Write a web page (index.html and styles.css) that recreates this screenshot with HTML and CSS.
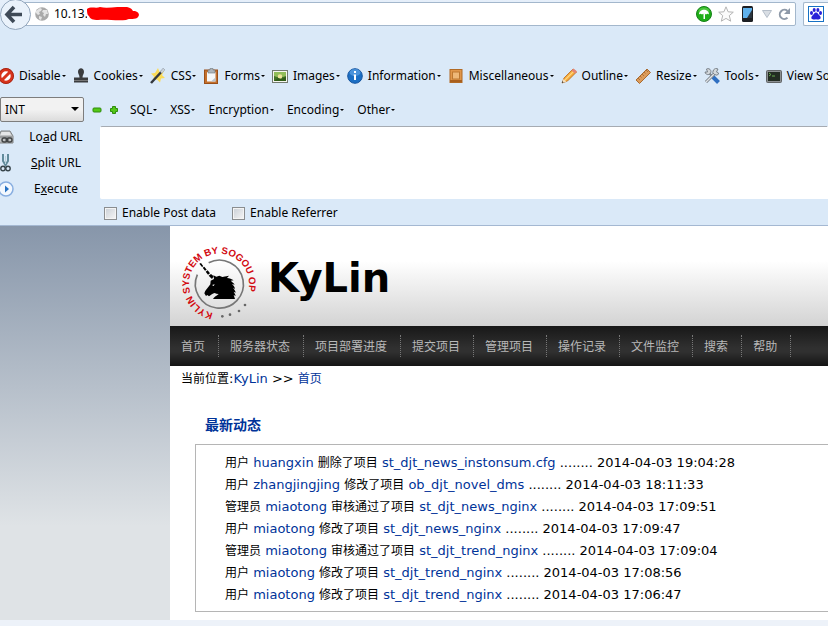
FILE: index.html
```html
<!DOCTYPE html>
<html lang="zh-CN">
<head>
<meta charset="utf-8">
<title>KyLin</title>
<link rel="stylesheet" href="styles.css">
</head>
<body>
<div class="browser">
  <div class="location">
    <button class="back" aria-label="Back"><svg width="32" height="32" viewBox="0 0 32 32"><circle cx="15.500" cy="15.500" r="15" fill="#eaf2fb" stroke="#93a6bc"/><path d="M14 8 7 15.500l7 7.500M8 15.500h14" fill="none" stroke="#3f4a57" stroke-width="3.600"/></svg></button>
    <div class="address">
      <svg width="14" height="14" viewBox="0 0 14 14"><circle cx="7" cy="7" r="6.800" fill="#a9a9a9"/><path d="M1 4l4-3 2 1-1 2-2 1 1 2-2 1-2-2zM8 3l4 0 1 4-2 0-1 3-2-2 1-2-2-1zM4 9l3 1-1 3-2-1z" fill="#e4e4e4"/></svg>
      <input class="url" aria-label="Address" value="10.13.">
      <svg class="scribble" width="52" height="14" viewBox="0 0 52 14"><path d="M0 2C4-1 9 2 13 0c8 2 17-1 27 0 5 1 5 3 6 4 6 0 7 4 5 6-2 3-9 1-12 3-10 1-20-1-28 0-5 0-8-1-9-4C0 8 0 5 0 2z" fill="#f00"/></svg>
      <svg width="16" height="16" viewBox="0 0 16 16"><circle cx="8" cy="8" r="7.500" fill="#1fae17" stroke="#16821a"/><ellipse cx="8" cy="5" rx="5.500" ry="3.500" fill="#65d354" opacity=".6"/><path d="M3 8.500C3 2 13 2 13 8.500c-1-1-2-1-3 0-1-1-1.500-1-2 0-.5-1-1-1-2 0-1-1-2-1-3 0zM7.500 8h1.500v5H7.500z" fill="#fff"/></svg>
      <svg width="16" height="16" viewBox="0 0 16 16"><path d="M8 .8l2.100 5 5.200.4-4 3.400 1.400 5.600L8 12.400l-4.700 2.800 1.400-5.600-4-3.400 5.200-.4z" fill="#fbfbfb" stroke="#b4b4b4"/></svg>
      <svg class="phone" width="11" height="16" viewBox="0 0 11 16"><rect width="11" height="16" rx="1.500" fill="#1d1f23"/><path d="M1 2h9v10H1z" fill="#5fb1ec"/><path d="M10 4v8H5z" fill="#2b3640"/></svg>
      <svg width="10" height="8" viewBox="0 0 10 8"><path d="M.5.500h9L5 7.500z" fill="#d9dee4" stroke="#b5bec9"/></svg>
      <svg width="13" height="13" viewBox="0 0 13 13"><path d="M9.500 9.800A4.600 4.600 0 1 1 9.500 3" fill="none" stroke="#8e99a8" stroke-width="2"/><path d="M12 0v6H6z" fill="#8e99a8"/></svg>
    </div>
    <div class="search"><svg width="16" height="16" viewBox="0 0 16 16"><rect x=".5" y=".5" width="15" height="15" fill="#fff" stroke="#1671c4"/><g fill="#2a22d8"><ellipse cx="3.500" cy="7" rx="1.500" ry="2"/><ellipse cx="6.200" cy="4" rx="1.500" ry="2"/><ellipse cx="9.900" cy="4" rx="1.500" ry="2"/><ellipse cx="12.500" cy="7" rx="1.500" ry="2"/><path d="M8 6.500c2 0 2 2 4 3.500 2 3-1 4-4 3.300-3 .7-6-.3-4-3.300C6 8.500 6 6.500 8 6.500z"/></g></svg></div>
  </div>

  <div class="developer">
    <button class="item"><svg viewBox="0 0 16 16"><circle cx="8" cy="8" r="6.200" fill="#fff" stroke="#d8341c" stroke-width="3"/><path d="M3.500 12.500l9-9" stroke="#d8341c" stroke-width="3"/><circle cx="8" cy="8" r="7.500" fill="none" stroke="#a82413"/></svg>Disable</button>
    <button class="item"><svg viewBox="0 0 16 16"><path d="M5 4c0-5 6-5 6 0 0 2-1.500 3-1.500 5.500H15v5H1v-5h5.500C6.500 7 5 6 5 4z" fill="#3a3c3e"/><path d="M1 12.500h14" stroke="#777"/></svg>Cookies</button>
    <button class="item"><svg viewBox="0 0 16 16"><path d="M8 0l1.500 4 4.500-1-2 4 3 3-4 .5-1 4-3-3-4 1 1-4-3-3 4-.5z" fill="#fbdc59"/><path d="M1 15L14 1" stroke="#33383d" stroke-width="2.500"/><path d="M11 4.500L14 1" stroke="#c9d3dc" stroke-width="2.500"/></svg>CSS</button>
    <button class="item"><svg viewBox="0 0 16 16"><rect x="1.500" y="2" width="13" height="13.500" fill="#c4702c" stroke="#9a4f18"/><path d="M4 4h8.500v9.500H4z" fill="#f5f7f8"/><path d="M8 13.500l4.500-4v4z" fill="#b9c2c9"/><path d="M5 2h2V.5h3V2h2v3H5z" fill="#aeb5ba" stroke="#71777b" stroke-width=".6"/></svg>Forms</button>
    <button class="item"><svg viewBox="0 0 16 16"><rect x=".5" y="2.500" width="15" height="12" fill="#f6f6f0" stroke="#737b70"/><path d="M2 4h12v9H2z" fill="#437326"/><path d="M2 4h12v4l-3 1-3-2-3 2-3-1z" fill="#91bd59"/><circle cx="8" cy="8.500" r="2.300" fill="#eee39a"/><path d="M2 13l4-3 3 1 5-2v4z" fill="#315e18"/></svg>Images</button>
    <button class="item"><svg viewBox="0 0 16 16"><circle cx="8" cy="8" r="7.300" fill="#1c6fc4" stroke="#1555a0"/><ellipse cx="8" cy="4.500" rx="5.500" ry="3.500" fill="#69aceb" opacity=".6"/><path d="M7 3h2v2H7zM6.500 6.500H9V12H7V8z" fill="#fff"/></svg>Information</button>
    <button class="item"><svg viewBox="0 0 16 16"><rect x="2" y="1.500" width="12" height="13" fill="#e0974b" stroke="#b16a25"/><rect x="4.500" y="4" width="7" height="7" fill="#eeb878" stroke="#bd7830"/><path d="M2 13h12" stroke="#a85f1d" stroke-width="2"/></svg>Miscellaneous</button>
    <button class="item"><svg viewBox="0 0 16 16"><path d="M1 15l2-5 9-9 3.500 3L6.500 13z" fill="#f4a83c" stroke="#b76a18" stroke-width=".8"/><path d="M4 12l8.500-8.500" stroke="#ffd77d" stroke-width="1.300"/><path d="M10.500 2.500l2-2L16 3.500l-2 2z" fill="#e48478"/><path d="M1 15l1.500-4 3 2.500z" fill="#f4dfbd"/><path d="M1 15l1.500-.5L1.300 13z" fill="#333"/></svg>Outline</button>
    <button class="item"><svg viewBox="0 0 16 16"><path d="M1 12L12 1l3.500 3.500-11 11z" fill="#dc9c5b" stroke="#a86a30"/><path d="M3 10l2 2M5 8l1.500 1.500M7 6l2 2M9 4l1.500 1.500M11 2l2 2" stroke="#9a5e26" stroke-width=".7"/></svg>Resize</button>
    <button class="item"><svg viewBox="0 0 16 16"><path d="M4 4l5 5" stroke="#80878f" stroke-width="2"/><path d="M9 9l5.500 5.500" stroke="#2f6fc1" stroke-width="4"/><path d="M2 14L12 4" stroke="#727980" stroke-width="3"/><path d="M2 14L12 4" stroke="#dfe4e8" stroke-width="1.400"/><path d="M14 1A3.300 3.300 0 1 0 15 5.500L12.500 4zM2.500 1A3 3 0 1 1 1 4l2.500 0z" fill="#d3d8dc" stroke="#656c73" stroke-width=".8"/></svg>Tools</button>
    <button class="item"><svg viewBox="0 0 16 16"><rect x=".5" y="2.500" width="15" height="12" rx="1" fill="#8b8f91" stroke="#606466"/><path d="M2 4h12v9H2z" fill="#222c22"/><path d="M3 5l2 1.500L3 8M6 8h3" fill="none" stroke="#66a94f"/></svg>View Source</button>
  </div>

  <div class="hackbar">
    <span class="mode"><select aria-label="Mode"><option>INT</option></select></span>
    <button class="sign" aria-label="Remove"><svg width="10" height="10" viewBox="0 0 10 10"><rect x="1" y="3" width="8" height="4" rx="1" fill="#54c817" stroke="#2f8c0c"/></svg></button>
    <button class="sign" aria-label="Add"><svg width="10" height="10" viewBox="0 0 10 10"><path d="M3.500 1.500h3v2h2v3h-2v2h-3v-2h-2v-3h2z" fill="#54c817" stroke="#2f8c0c"/></svg></button>
    <button class="item">SQL</button>
    <button class="item">XSS</button>
    <button class="item">Encryption</button>
    <button class="item">Encoding</button>
    <button class="item">Other</button>
  </div>

  <div class="request">
    <div class="actions">
      <button class="action"><svg width="16" height="16" viewBox="0 0 16 16"><path d="M3 2h9l3 5v7H1V7z" fill="#bfc1c2" stroke="#808384"/><path d="M3.500 3h8L13 6H2.500z" fill="#e5e6e7"/><path d="M2 8h12" stroke="#77797a"/><rect x="4" y="9" width="5" height="4" rx="2" fill="none" stroke="#414344" stroke-width="1.400"/><rect x="9" y="9" width="5" height="4" rx="2" fill="none" stroke="#414344" stroke-width="1.400"/><path d="M7 11h4" stroke="#414344"/></svg><span>Lo<u>a</u>d URL</span></button>
      <button class="action"><svg width="16" height="18" viewBox="0 0 16 18"><path d="M5 0v7l3 5M10 0v7l-3 5" fill="none" stroke="#628b9b" stroke-width="2"/><path d="M7.500 2v8" stroke="#b9d3dc"/><circle cx="5" cy="14.500" r="2.200" fill="none" stroke="#38454b" stroke-width="1.400"/><circle cx="10" cy="14.500" r="2.200" fill="none" stroke="#38454b" stroke-width="1.400"/></svg><span><u>S</u>plit URL</span></button>
      <button class="action"><svg width="16" height="16" viewBox="0 0 16 16"><circle cx="8" cy="8" r="7" fill="#f3f8fe" stroke="#88aee0" stroke-width="1.500"/><path d="M7 4.500l4 3.500-4 3.500z" fill="#2772c4"/></svg><span>E<u>x</u>ecute</span></button>
    </div>
    <div class="payload">
      <textarea aria-label="Request URL"></textarea>
      <div class="options">
        <label><input type="checkbox">Enable Post data</label>
        <label><input type="checkbox">Enable Referrer</label>
      </div>
    </div>
  </div>
</div>

<div class="page">
  <aside class="side"></aside>
  <main class="main">
    <header class="banner">
      <svg class="logo" width="78" height="78" viewBox="0 0 234 234" role="img" aria-label="KyLin">
        <path id="ring" d="M117 206A90 90 0 0 1 117 26A90 90 0 0 1 117 206" fill="none"/>
        <text class="motto"><textPath href="#ring" startOffset="18">KYLIN SYSTEM BY SOGOU OP</textPath></text>
        <path d="M86 53A72 72 0 1 1 52 89" fill="none" stroke="#777" stroke-width="5"/>
        <path d="M58 56l5-2 7 10-4 2zM68 68l5-3 7 9-5 3zM77 80l6-4 7 9-6 4zM86 92l7-5 8 7-5 8z" fill="#000"/>
        <path d="M100 91l9 4 9-3 9 4 20-4-6 7c8 0 14 3 20 7l-9 1c5 4 9 7 12 12l-8-2c5 5 8 9 9 15l-6-4c4 5 7 9 8 15l-6-3c3 5 5 8 6 13l-6-3 4 12H99c3-5 9-9 17-15-5 0-9-1-12-3-6 2-11 5-17 10l-5-4-4 3-5-8c2-9 11-16 18-27l1-11 10-5z" fill="#000"/>
        <path d="M96 120l8-2-3 5z" fill="#fff"/>
        <g fill="#666"><circle cx="127" cy="214" r="4"/><circle cx="150" cy="209" r="4"/><circle cx="177" cy="198" r="4"/><circle cx="195" cy="180" r="4"/></g>
      </svg>
      <h1>KyLin</h1>
    </header>
    <nav class="menu">
      <a href="#">首页</a><a href="#">服务器状态</a><a href="#">项目部署进度</a><a href="#">提交项目</a><a href="#">管理项目</a><a href="#">操作记录</a><a href="#">文件监控</a><a href="#">搜索</a><a href="#">帮助</a>
    </nav>
    <div class="crumbs"><span class="zh">当前位置</span>:<a href="#">KyLin</a> &gt;&gt; <a class="zh" href="#">首页</a></div>
    <h2>最新动态</h2>
    <ul class="feed">
      <li><span class="zh">用户</span> <a href="#">huangxin</a> <span class="zh">删除了项目</span> <a href="#">st_djt_news_instonsum.cfg</a> ........ 2014-04-03 19:04:28</li>
      <li><span class="zh">用户</span> <a href="#">zhangjingjing</a> <span class="zh">修改了项目</span> <a href="#">ob_djt_novel_dms</a> ........ 2014-04-03 18:11:33</li>
      <li><span class="zh">管理员</span> <a href="#">miaotong</a> <span class="zh">审核通过了项目</span> <a href="#">st_djt_news_nginx</a> ........ 2014-04-03 17:09:51</li>
      <li><span class="zh">用户</span> <a href="#">miaotong</a> <span class="zh">修改了项目</span> <a href="#">st_djt_news_nginx</a> ........ 2014-04-03 17:09:47</li>
      <li><span class="zh">管理员</span> <a href="#">miaotong</a> <span class="zh">审核通过了项目</span> <a href="#">st_djt_trend_nginx</a> ........ 2014-04-03 17:09:04</li>
      <li><span class="zh">用户</span> <a href="#">miaotong</a> <span class="zh">修改了项目</span> <a href="#">st_djt_trend_nginx</a> ........ 2014-04-03 17:08:56</li>
      <li><span class="zh">用户</span> <a href="#">miaotong</a> <span class="zh">修改了项目</span> <a href="#">st_djt_trend_nginx</a> ........ 2014-04-03 17:06:47</li>
    </ul>
  </main>
</div>
</body>
</html>
```

FILE: styles.css
```css
* { box-sizing: border-box; }

body {
  margin: 0;
  background: #edf2f9;
  color: #000;
  font: 13px/22px "DejaVu Sans", "Noto Sans CJK SC", sans-serif;
  overflow: hidden;
}

button, input, select, textarea { font: inherit; color: inherit; }
button { padding: 0; border: 0; background: none; }
svg { display: block; flex: none; }
a { color: #039; text-decoration: none; }

/* Browser chrome */
.browser {
  background: linear-gradient(#e6effa, #dae9f8 30px);
  border-bottom: 1px solid #a4b8d2;
  font: 12px/20px "Noto Sans", sans-serif;
  overflow: hidden;
}

.location {
  display: flex;
  align-items: flex-start;
  height: 66px;
}

.back { margin-top: -1px; z-index: 1; }

.address {
  flex: 1;
  display: flex;
  align-items: center;
  gap: 6px;
  height: 24px;
  margin: 2px 7px 0 -10px;
  padding: 0 4px 0 12px;
  background: #fff;
  border: 1px solid #a3b7cc;
  border-radius: 2px;
}

.url {
  width: 33px;
  margin: 0 -6px 0 -1px;
  padding: 0;
  border: 0;
  outline: 0;
}

.scribble { margin-right: auto; }
.phone { margin: 0 3px 0 2px; }

.search {
  width: 25px;
  height: 24px;
  margin-top: 2px;
  padding: 3px 4px;
  background: #fff;
  border: 1px solid #a3b7cc;
  border-right: 0;
  border-radius: 2px 0 0 2px;
}

.developer {
  display: flex;
  gap: 7px;
  margin-left: -2px;
  white-space: nowrap;
}

.item {
  display: flex;
  flex: none;
  align-items: center;
  line-height: 20px;
}

.item svg { width: 16px; height: 16px; margin-right: 5px; }

.item::after {
  content: "";
  margin-left: 1px;
  border: 2px solid transparent;
  border-top-color: #000;
  border-bottom: 0;
}

.hackbar {
  display: flex;
  align-items: center;
  gap: 13px;
  margin-top: 11px;
}

.mode { position: relative; margin-right: -5px; }

.mode select {
  display: block;
  appearance: none;
  width: 84px;
  height: 25px;
  padding: 0 4px;
  border: 1px solid #7d7d7d;
  border-radius: 2px;
  background: linear-gradient(#f2f2f2 50%, #dcdcdc);
}

.mode::after {
  content: "";
  position: absolute;
  right: 5px;
  top: 10px;
  border: 4px solid transparent;
  border-top-color: #000;
  border-bottom: 0;
}

.sign { margin-right: -6px; }
.sign + .item { margin-left: 4px; }

.request { display: flex; margin-top: 4px; }
.actions { width: 100px; margin-top: -2px; }

.action {
  display: flex;
  align-items: center;
  width: 100%;
  height: 26px;
  margin-left: -2px;
}

.action span { flex: 1; }
.payload { flex: 1; }

textarea {
  display: block;
  width: 100%;
  height: 73px;
  border: 1px solid #fff;
  border-top-color: #a6abb2;
  border-radius: 2px 0 0 2px;
  outline: 0;
  resize: none;
}

.options { display: flex; gap: 16px; padding: 4px 4px 2px; }
.options label { display: flex; align-items: center; gap: 5px; }

.options input {
  appearance: none;
  width: 13px;
  height: 13px;
  margin: 0;
  border: 1px solid #8a8d8f;
  background: linear-gradient(135deg, #c9cfd6, #f6f6f6);
  box-shadow: inset 0 0 0 1px #f4f4f4;
}

/* Site */
.page { display: flex; }

.side {
  flex: none;
  width: 170px;
  background: linear-gradient(#8796aa, #dfe3e6 300px);
}

.main { flex: 1; min-width: 0; padding-bottom: 8px; background: #fff; }

.banner {
  display: flex;
  align-items: center;
  gap: 10px;
  height: 100px;
  padding: 0 10px;
  background: linear-gradient(#fff 35%, #d3d3d3);
}

.logo { margin-top: 16px; }
.motto { font: bold 29px "Liberation Sans", sans-serif; fill: #d20a11; }
h1 { margin: 4px 0 0; font-size: 40px; line-height: 48px; }

.menu {
  display: flex;
  align-items: center;
  height: 40px;
  background: linear-gradient(#181818, #303030 55%, #303030 65%, #141414);
  font-size: 12px;
  line-height: 20px;
  white-space: nowrap;
}

.menu a { padding: 2px 13px 0 11px; border-right: 1px dotted #777; color: #b8b8b8; }
.zh { font-size: 12px; }
.crumbs { padding: 2px 11px; }

h2 {
  margin: 21px 35px 7px;
  color: #039;
  font-size: 14px;
  line-height: 24px;
}

.feed {
  margin: 0 0 0 25px;
  padding: 7px 0 5px 29px;
  border: 1px solid #b5b5b5;
  border-right: 0;
  list-style: none;
  white-space: nowrap;
}
```
